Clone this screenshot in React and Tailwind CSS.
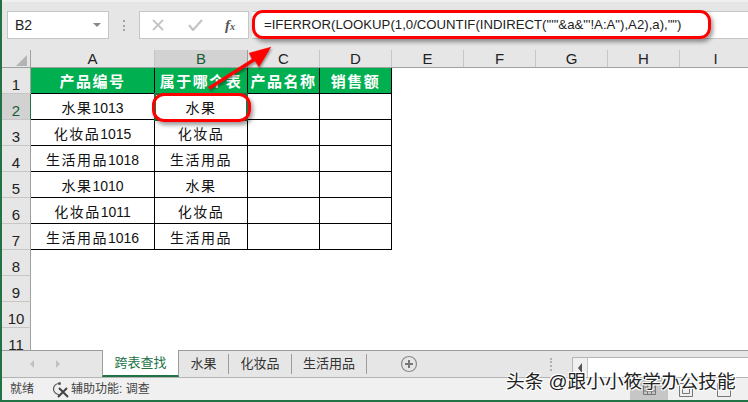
const F = { fontFamily: '"Liberation Sans","Noto Sans CJK SC",sans-serif' };
const cols = ["A", "B", "C", "D", "E", "F", "G", "H", "I"];
const gridCols = "grid grid-cols-[29px_124px_93px_72px_72px_72px_72px_72px_72px_72px]";
const data = [
  ["水果", "1013", "水果"],
  ["化妆品", "1015", "化妆品"],
  ["生活用品", "1018", "生活用品"],
  ["水果", "1010", "水果"],
  ["化妆品", "1011", "化妆品"],
  ["生活用品", "1016", "生活用品"],
];
const heads = ["产品编号", "属于哪个表", "产品名称", "销售额"];

function RowHead({ n, active }) {
  return (
    <div className={"h-[26px] flex items-end justify-center text-[15px] leading-[16px] border-b border-r border-b-[#c6c6c6] " + (active ? "bg-[#d2d2d2] text-[#185c37] border-r-[#217346]" : "bg-[#e6e6e6] text-[#222] border-r-[#a0a0a0]")}>
      {n}
    </div>
  );
}

function Cell({ children, className = "" }) {
  return <div className={"h-[26px] pt-[3px] flex items-center justify-center border-r border-b border-black text-[14px] text-[#111] " + className}>{children}</div>;
}

function Zh({ children }) {
  return <span className="tracking-[1.5px]">{children}</span>;
}

function Row({ n, children }) {
  return (
    <div className={gridCols}>
      <RowHead n={n} active={n === 2} />
      {children}
    </div>
  );
}

export default function App() {
  return (
    <div style={F} className="relative w-[748px] h-[402px] overflow-hidden flex flex-col bg-white border-l-2 border-l-[#217346] border-b-2 border-b-[#217346]">
      {/* formula bar */}
      <div className="h-[50px] shrink-0 bg-[#e6e6e6] border-t-2 border-t-[#f0f0f0] flex items-start pt-[9px] pl-[5px]">
        <div className="w-[102px] h-[28px] bg-white border border-[#c6c6c6] flex items-center justify-between pl-[7px] pr-[7px] text-[14px] text-[#222]">
          <span>B2</span>
          <span className="w-0 h-0 border-x-[4px] border-x-transparent border-t-[4px] border-t-[#888]" />
        </div>
        <div className="w-[30px] h-[28px] flex items-center justify-center">
          <div className="w-[2px] h-[11px] border-l-2 border-dotted border-[#a5a5a5]" />
        </div>
        <div className="w-[110px] h-[28px] bg-white border border-[#c6c6c6] flex items-center text-[#c4c4c4]">
          <svg width="12" height="12" viewBox="0 0 12 12" className="ml-[12px]"><path d="M1 1l10 10M11 1L1 11" stroke="#c4c4c4" strokeWidth="1.8" /></svg>
          <svg width="15" height="12" viewBox="0 0 15 12" className="ml-[24px]"><path d="M1 6l4 5 9-10" fill="none" stroke="#c4c4c4" strokeWidth="2.2" /></svg>
          <span className="ml-[22px] text-[#555] text-[15px] italic font-bold" style={{ fontFamily: '"Liberation Serif",serif' }}>f<span className="text-[10px]">x</span></span>
        </div>
        <div className="ml-[3px] flex-1 h-[28px] bg-white border-y border-[#c6c6c6] flex items-center pl-[12px] text-[13.2px] text-[#222] whitespace-nowrap">
          =IFERROR(LOOKUP(1,0/COUNTIF(INDIRECT("'"&amp;a&amp;"'!A:A"),A2),a),"")
        </div>
      </div>

      {/* column headers */}
      <div className={gridCols + " h-[18px] shrink-0 bg-[#e6e6e6] border-b border-b-[#a0a0a0]"}>
        <div className="relative border-r border-[#a0a0a0]">
          <span className="absolute right-[3px] bottom-[1px] w-0 h-0 border-l-[11px] border-l-transparent border-b-[11px] border-b-[#b4b4b4]" />
        </div>
        {cols.map((c) => (
          <div key={c} className={"flex items-center justify-center text-[15px] leading-none border-r " + (c === "B" ? "bg-[#d2d2d2] text-[#185c37] border-r-[#9c9c9c]" : "text-[#222] border-r-[#c6c6c6]")}>
            {c}
          </div>
        ))}
      </div>

      {/* sheet */}
      <div className="flex-1 overflow-hidden">
        <Row n={1}>
          {heads.map((h) => (
            <Cell key={h} className="bg-[#00b050] text-white text-[15px] font-bold whitespace-nowrap overflow-hidden tracking-[1.5px]">{h}</Cell>
          ))}
        </Row>
        {data.map((d, i) => (
          <Row key={i} n={i + 2}>
            <Cell><Zh>{d[0]}</Zh>{d[1]}</Cell>
            <Cell><Zh>{d[2]}</Zh></Cell>
            <Cell />
            <Cell />
          </Row>
        ))}
        {[8, 9, 10, 11].map((n) => (
          <Row key={n} n={n} />
        ))}
      </div>

      {/* tabs */}
      <div className="h-[28px] shrink-0 bg-[#e6e6e6] border-t border-t-[#9c9c9c] border-b border-b-[#b4b4b4] flex items-stretch text-[13px] text-[#333]">
        <div className="w-[100px] flex items-center pl-[28px] gap-[22px] text-[#bbb]">
          <span className="w-0 h-0 border-y-[4px] border-y-transparent border-r-[4px] border-r-[#c0c0c0]" />
          <span className="w-0 h-0 border-y-[4px] border-y-transparent border-l-[4px] border-l-[#c0c0c0]" />
        </div>
        <div className="w-[77px] -mt-px bg-white border-x border-x-[#9c9c9c] border-b-2 border-b-[#217346] flex items-center justify-center text-[#217346]">跨表查找</div>
        <div className="w-[50px] my-[3px] border-r border-[#9c9c9c] flex items-center justify-center">水果</div>
        <div className="w-[63px] my-[3px] border-r border-[#9c9c9c] flex items-center justify-center">化妆品</div>
        <div className="w-[75px] my-[3px] border-r border-[#9c9c9c] flex items-center justify-center">生活用品</div>
        <div className="w-[190px] flex items-center">
          <svg width="18" height="18" viewBox="0 0 18 18" className="ml-[33px]">
            <circle cx="9" cy="9" r="7.5" fill="none" stroke="#8a8a8a" strokeWidth="1.2" />
            <path d="M9 5v8M5 9h8" stroke="#777" strokeWidth="2" />
          </svg>
          <div className="ml-[132px] w-[2px] h-[13px] border-l-2 border-dotted border-[#b0b0b0]" />
        </div>
        <div className="ml-[15px] flex-1 mt-[6px] flex items-stretch bg-white border-l border-t border-[#b4b4b4]">
          <div className="w-[15px] bg-[#f0f0f0] border-r border-[#c6c6c6] flex items-center justify-center">
            <span className="w-0 h-0 border-y-[5px] border-y-transparent border-r-[4px] border-r-[#555]" />
          </div>
        </div>
      </div>

      {/* status */}
      <div className="h-[22px] shrink-0 bg-[#f0f0f0] flex items-center text-[12px] text-[#444] relative">
        <span className="ml-[8px]">就绪</span>
        <svg width="17" height="17" viewBox="0 0 17 17" className="ml-[18px]">
          <path d="M7 2.5a5.5 5.5 0 1 0 0 11" fill="none" stroke="#555" strokeWidth="1.2" />
          <circle cx="7.5" cy="2.5" r="1.5" fill="#555" />
          <path d="M7 7l9 9M15 7l-9 9" stroke="#444" strokeWidth="2" />
        </svg>
        <span className="ml-[2px] text-[12px]">辅助功能: 调查</span>
        <div className="ml-auto mr-[80px] w-[38px] h-full bg-[#c6c6c6] flex items-center justify-center">
          <svg width="13" height="12" viewBox="0 0 13 12"><path d="M.5.5h12v11H.5zM.5 4h12M.5 8h12M4.5.5v11M8.5.5v11" fill="none" stroke="#777" /></svg>
        </div>
        <svg width="14" height="14" viewBox="0 0 14 14" className="absolute left-[677px] top-[5px]"><path d="M.5.5h13v13H.5zM3.5 4.5h7v6h-7z" fill="none" stroke="#777" /></svg>
        <svg width="14" height="14" viewBox="0 0 14 14" className="absolute left-[715px] top-[5px]"><path d="M.5.5h13v13H.5z" fill="none" stroke="#777" /></svg>
      </div>

      {/* B2 selection */}
      <div className="absolute left-[152px] top-[93px] w-[94px] h-[28px] border-2 border-[#217346]" />

      {/* annotations */}
      <div className="absolute left-[250px] top-[10px] w-[459px] h-[29px] rounded-[11px] border-[3px] border-[#ff0000] shadow-[2px_3px_4px_rgba(0,0,0,0.4)]" />
      <div className="absolute left-[150px] top-[93px] w-[99px] h-[29px] rounded-[12px] border-[3px] border-[#ff0000] shadow-[2px_3px_4px_rgba(0,0,0,0.4)]" />
      <svg width="70" height="50" viewBox="0 0 70 50" className="absolute left-[203px] top-[44px]">
        <path d="M3 43L47 15l-3-6 22-6-12 20-4-6L5 45.5z" fill="#ff0000" stroke="#ff0000" strokeWidth="0.3" style={{ filter: "drop-shadow(1px 2px 1px rgba(0,0,0,0.35))" }} />
      </svg>

      {/* watermark */}
      <div className="absolute left-[504px] top-[369px] text-[18.7px] leading-[26px] whitespace-nowrap text-[#222] [text-shadow:1px_1px_0_#fff,-1px_-1px_0_#fff,1px_-1px_0_#fff,-1px_1px_0_#fff]">
        头条 @跟小小筱学办公技能
      </div>
    </div>
  );
}
